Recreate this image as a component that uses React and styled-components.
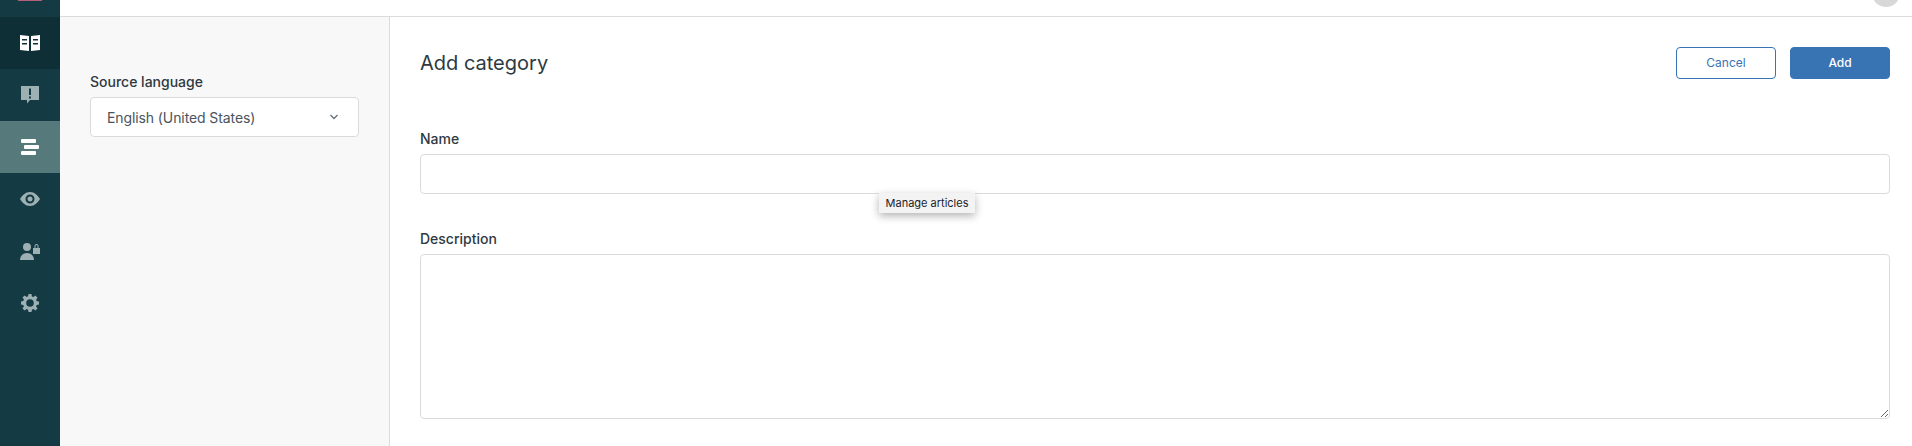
import styled, { createGlobalStyle } from "styled-components";

const GlobalStyle = createGlobalStyle`
  html, body { margin: 0; height: 100%; background: #fff; overflow: hidden; }
  body { font-family: Inter, "Liberation Sans", sans-serif; color: #2f3941; }
  * { box-sizing: border-box; }
`;

const Page = styled.div`
  display: flex;
  height: 446px;
  position: relative;
`;

const Sidebar = styled.nav`
  width: 60px;
  flex: none;
  background: #143a43;
  display: flex;
  flex-direction: column;
`;

const Logo = styled.div`
  height: 17px;
  display: flex;
  justify-content: center;
  &::before {
    content: "";
    width: 24px;
    height: 1px;
    background: #b5607a;
  }
`;

const NavItem = styled.div`
  height: 52px;
  display: flex;
  align-items: center;
  justify-content: center;
  color: ${p => (p.$state ? "#fff" : "#9db0b4")};
  background: ${p => (p.$state === "current" ? "#0f2f37" : p.$state === "active" ? "#567a7b" : "transparent")};
`;

const Main = styled.div`
  flex: 1;
  display: flex;
  flex-direction: column;
  min-width: 0;
`;

const TopBar = styled.header`
  height: 17px;
  flex: none;
  border-bottom: 1px solid #d8dcde;
  display: flex;
  justify-content: flex-end;
  padding-right: 12px;
  overflow: hidden;
`;

const Avatar = styled.div`
  width: 28px;
  height: 28px;
  margin-top: -21px;
  border-radius: 50%;
  background: #d8d8d8;
`;

const Body = styled.div`
  flex: 1;
  display: flex;
`;

const SidePanel = styled.aside`
  width: 330px;
  flex: none;
  background: #f8f8f8;
  border-right: 1px solid #d8dcde;
  padding: 55px 30px 0;
`;

const Content = styled.main`
  flex: 1;
  min-width: 0;
  padding: 30px 22px 0 30px;
`;

const Header = styled.div`
  display: flex;
  justify-content: space-between;
  align-items: center;
  height: 32px;
  margin-bottom: 50px;
`;

const Title = styled.h1`
  margin: 0;
  font-size: 20px;
  line-height: 32px;
  font-weight: 400;
  color: #2f3941;
`;

const Actions = styled.div`
  display: flex;
  gap: 14px;
`;

const Button = styled.button`
  width: 100px;
  height: 32px;
  border-radius: 4px;
  border: 1px solid #3873b4;
  font: ${p => (p.$primary ? 500 : 400)} 12px/1 Inter, "Liberation Sans", sans-serif;
  background: ${p => (p.$primary ? "#3873b4" : "#fff")};
  color: ${p => (p.$primary ? "#fff" : "#3873b4")};
`;

const Label = styled.label`
  display: block;
  font-size: 14px;
  line-height: 20px;
  font-weight: 500;
  color: #2f3941;
  margin-bottom: 5px;
`;

const Select = styled.div`
  height: 40px;
  background: #fff;
  border: 1px solid #d8dcde;
  border-radius: 4px;
  display: flex;
  align-items: center;
  justify-content: space-between;
  padding: 0 19px 0 16px;
  font-size: 14px;
  letter-spacing: -0.1px;
  color: #49545c;
`;

const Field = styled.div`
  margin-bottom: 35px;
`;

const TextInput = styled.input`
  display: block;
  width: 100%;
  height: 40px;
  border: 1px solid #d8dcde;
  border-radius: 4px;
  background: #fff;
  outline: none;
`;

const TextArea = styled.textarea`
  display: block;
  width: 100%;
  height: 165px;
  border: 1px solid #d8dcde;
  border-radius: 4px;
  background: #fff;
  outline: none;
`;

const Tooltip = styled.div`
  position: absolute;
  left: 879px;
  top: 193px;
  width: 96px;
  height: 20px;
  background: #f3f3f3;
  font-size: 11px;
  line-height: 20px;
  text-align: center;
  color: #1c1c28;
  box-shadow: 0 3px 9px rgba(0, 0, 0, 0.3);
`;

const BookIcon = () => (
  <svg width="20" height="16" viewBox="0 0 20 16" fill="currentColor">
    <path fillRule="evenodd" d="M0 0l9 1v15l-9-1zM11 1l9-1v15l-9 1zM2 4v1.500h5V4zM2 8v1.500h5V8zM13 4v1.500h5V4zM13 8v1.500h5V8z" />
  </svg>
);

const AlertIcon = () => (
  <svg width="18" height="18" viewBox="0 0 18 18" fill="currentColor">
    <path fillRule="evenodd" d="M0 0h18v14H9l-3 3.500V14H0zM8 2.500V9h2V2.500zM8 10.500v2h2v-2z" />
  </svg>
);

const ArticlesIcon = () => (
  <svg width="18" height="16" viewBox="0 0 18 16" fill="currentColor">
    <rect x="0" y="0" width="15" height="4" rx="1" />
    <rect x="3" y="6" width="15" height="4" rx="1" />
    <rect x="0" y="12" width="15" height="4" rx="1" />
  </svg>
);

const EyeIcon = () => (
  <svg width="20" height="14" viewBox="0 0 20 14" fill="currentColor">
    <path fillRule="evenodd" d="M10 0c4.500 0 8 3.500 10 7-2 3.500-5.500 7-10 7S2 10.500 0 7c2-3.500 5.500-7 10-7zm0 2.500a4.500 4.500 0 1 0 0 9 4.500 4.500 0 0 0 0-9zm0 2a2.500 2.500 0 1 1 0 5 2.500 2.500 0 0 1 0-5z" />
  </svg>
);

const UserLockIcon = () => (
  <svg width="20" height="17" viewBox="0 0 20 17" fill="currentColor">
    <circle cx="7" cy="4" r="4" />
    <path d="M0 17c0-4 3-7 7-7s7 3 7 7z" />
    <path fillRule="evenodd" d="M13 5h7v6h-7zM14.500 5V3a2 2 0 0 1 4 0v2h-1V3a1 1 0 0 0-2 0v2z" />
  </svg>
);

const GearIcon = () => (
  <svg width="18" height="18" viewBox="0 0 18 18" fill="currentColor">
    <path fillRule="evenodd" d="M7.500 0h3l.4 2.400 1.500.6 2-1.400 2.100 2.100-1.400 2 .6 1.500L18 7.500v3l-2.300.4-.6 1.500 1.400 2-2.100 2.100-2-1.400-1.500.6-.4 2.300h-3l-.4-2.300-1.500-.6-2 1.400-2.100-2.100 1.400-2-.6-1.500L0 10.500v-3l2.300-.4.6-1.500-1.400-2 2.100-2.100 2 1.400 1.500-.6zM9 5.200a3.800 3.800 0 1 0 0 7.600 3.800 3.800 0 0 0 0-7.600z" />
  </svg>
);

const Chevron = () => (
  <svg width="10" height="6" viewBox="0 0 10 6" fill="none" stroke="#68737d" strokeWidth="1.400">
    <path d="M1.500 1l3.500 3.500L8.500 1" />
  </svg>
);

const navItems = [
  { icon: <BookIcon />, state: "current" },
  { icon: <AlertIcon /> },
  { icon: <ArticlesIcon />, state: "active" },
  { icon: <EyeIcon /> },
  { icon: <UserLockIcon /> },
  { icon: <GearIcon /> },
];

export default function App() {
  return (
    <Page>
      <GlobalStyle />
      <Sidebar>
        <Logo />
        {navItems.map((item, i) => (
          <NavItem key={i} $state={item.state}>{item.icon}</NavItem>
        ))}
      </Sidebar>
      <Main>
        <TopBar>
          <Avatar />
        </TopBar>
        <Body>
          <SidePanel>
            <Label>Source language</Label>
            <Select>
              <span>English (United States)</span>
              <Chevron />
            </Select>
          </SidePanel>
          <Content>
            <Header>
              <Title>Add category</Title>
              <Actions>
                <Button>Cancel</Button>
                <Button $primary>Add</Button>
              </Actions>
            </Header>
            <Field>
              <Label>Name</Label>
              <TextInput />
            </Field>
            <Field>
              <Label>Description</Label>
              <TextArea />
            </Field>
          </Content>
        </Body>
      </Main>
      <Tooltip>Manage articles</Tooltip>
    </Page>
  );
}
